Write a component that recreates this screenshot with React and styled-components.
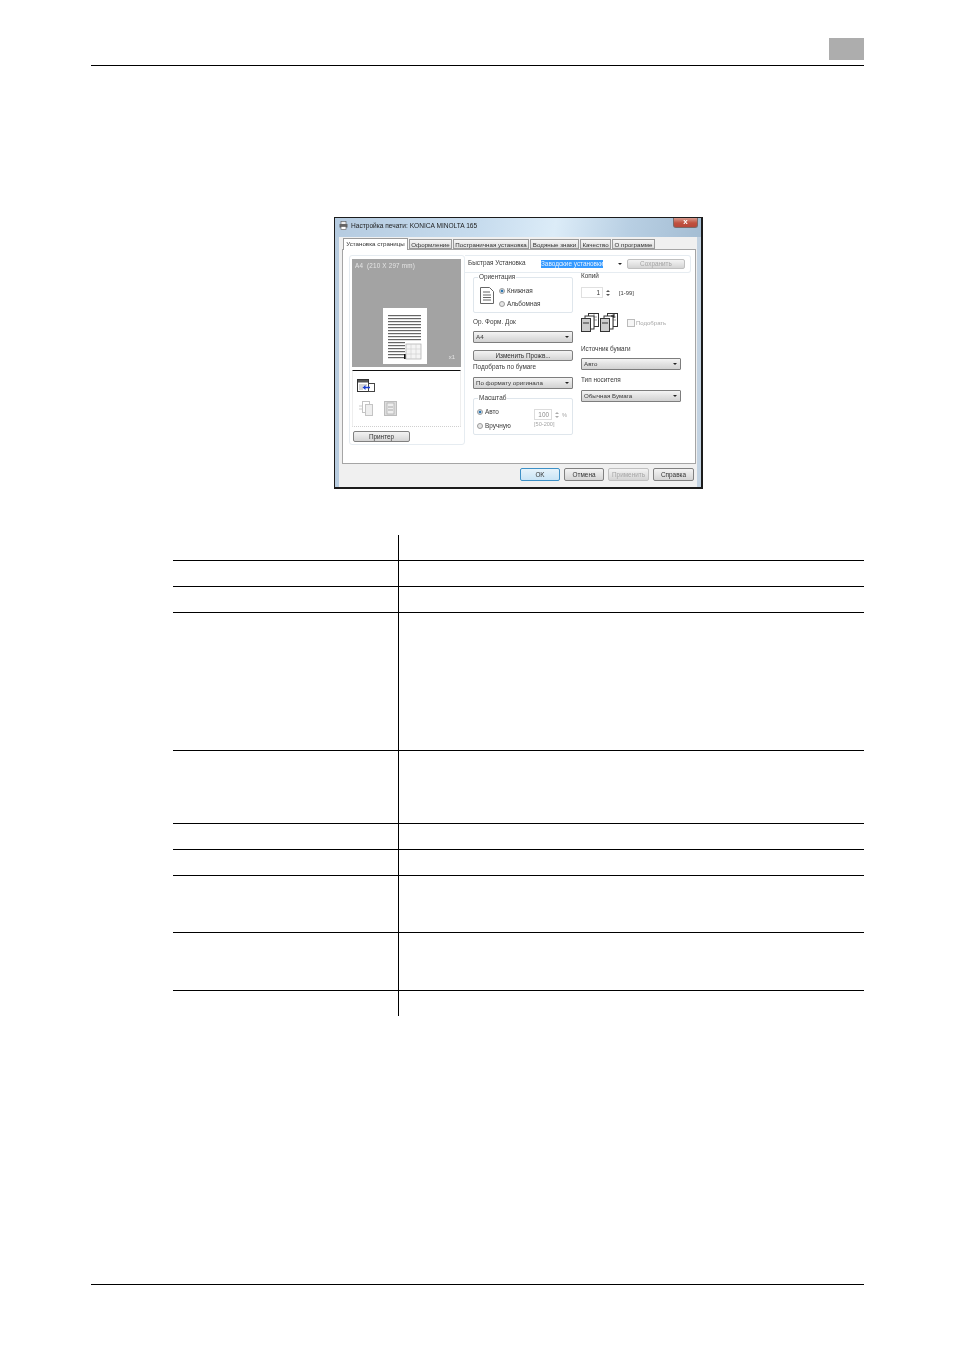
import React from "react";
import styled, { createGlobalStyle } from "styled-components";

const Global = createGlobalStyle`
  html, body { margin: 0; padding: 0; background: #fff; }
  body { font-family: "Liberation Sans", Arial, sans-serif; }
`;

const Page = styled.div`
  width: 954px;
  height: 1350px;
  overflow: hidden;
  display: flex;
  flex-direction: column;
  background: #fff;
`;

const Header = styled.header`
  margin: 38px 90px 0 91px;
  height: 27px;
  flex: none;
  border-bottom: 1px solid #000;
  display: flex;
  justify-content: flex-end;
  align-items: flex-start;
`;
const ChapterBox = styled.div`
  width: 35px;
  height: 22px;
  background: #adadad;
`;

const Dialog = styled.section`
  box-sizing: border-box;
  margin: 151px 0 0 334px;
  width: 369px;
  height: 272px;
  flex: none;
  background: #f0f0f0;
  border: 1px solid #1c1c1c;
  border-width: 1px 2px 2px 1px;
  box-shadow: inset 4px 0 0 #b9cde0, inset -4px 0 0 #c3d3e2;
  display: flex;
  flex-direction: column;
  font-size: 6.4px;
  line-height: 8px;
  color: #3a3a3a;
  filter: blur(0.4px);
`;

const TitleBar = styled.div`
  height: 19px;
  flex: none;
  padding: 0 3px 0 4px;
  display: flex;
  align-items: flex-start;
  background: linear-gradient(100deg, #b5cbe0 0%, #c7dcee 40%, #dcecf8 60%, #b8cfe3 80%, #a4bdd3 100%);
`;
const TitleIcon = styled.svg`
  width: 9px;
  height: 9px;
  margin: 3px 3px 0 0;
`;
const TitleText = styled.span`
  margin-top: 4px;
  font-size: 6.6px;
  color: #1d1d1d;
  flex: 1;
`;
const CloseButton = styled.div`
  width: 25px;
  height: 10px;
  background: linear-gradient(#d79a8e, #c0513e 55%, #b8473a);
  border: 1px solid #7b6a68;
  border-top: none;
  border-radius: 0 0 3px 3px;
  box-sizing: border-box;
  color: #fff;
  font-size: 8px;
  line-height: 8px;
  font-weight: bold;
  text-align: center;
`;

const Tabs = styled.div`
  flex: none;
  height: 12px;
  margin-left: 8px;
  display: flex;
  align-items: flex-end;
  position: relative;
  z-index: 1;
`;
const Tab = styled.div`
  box-sizing: border-box;
  width: ${(p) => p.$w}px;
  height: ${(p) => (p.$active ? 12 : 10)}px;
  margin-bottom: ${(p) => (p.$active ? -1 : 0)}px;
  background: ${(p) => (p.$active ? "#fff" : "linear-gradient(#f6f6f6,#dedede)")};
  border: 1px solid #9a9a9a;
  border-bottom: ${(p) => (p.$active ? "none" : "1px solid #9a9a9a")};
  font-size: 6.2px;
  line-height: 9px;
  text-align: center;
  white-space: nowrap;
  overflow: hidden;
  color: #333;
  margin-right: 1px;
`;

const TabPanel = styled.div`
  box-sizing: border-box;
  margin-left: 7px;
  width: 354px;
  height: 215px;
  flex: none;
  background: #fff;
  border: 1px solid #a5a5a5;
  padding: 5px 4px 0 6px;
  display: flex;
  align-items: flex-start;
`;

const LeftGroup = styled.div`
  box-sizing: border-box;
  width: 116px;
  height: 190px;
  flex: none;
  border: 1px solid #e6ecf1;
  border-radius: 3px;
  padding: 3px 3px 0 2px;
  display: flex;
  flex-direction: column;
`;
const Preview = styled.div`
  box-sizing: border-box;
  width: 109px;
  height: 108px;
  background: #a3a3a3;
  position: relative;
  flex: none;
  display: flex;
  align-items: flex-end;
  justify-content: center;
  padding-right: 3px;
  padding-bottom: 3px;
`;
const PreviewLabel = styled.span`
  position: absolute;
  left: 3px;
  top: 3px;
  color: #e4e4e4;
  font-size: 6.3px;
  letter-spacing: 0.2px;
`;
const PreviewCount = styled.span`
  position: absolute;
  right: 6px;
  bottom: 6px;
  color: #e4e4e4;
  font-size: 6px;
`;
const LayoutBox = styled.div`
  box-sizing: border-box;
  margin-top: 3px;
  width: 109px;
  height: 57px;
  border-top: 1px solid #111;
  border-left: 1px solid #eeeeee;
  border-right: 1px solid #eeeeee;
  border-bottom: 1px dotted #cfcfcf;
  padding: 8px 0 0 4px;
  display: flex;
  flex-direction: column;
  gap: 8px;
`;
const IconRow = styled.div`
  display: flex;
  gap: 11px;
  padding-left: 1px;
`;

const Button = styled.div`
  box-sizing: border-box;
  width: ${(p) => p.$w}px;
  height: ${(p) => p.$h || 11}px;
  border: 1px solid ${(p) => (p.$primary ? "#3d90c6" : p.$disabled ? "#c0c0c0" : "#808080")};
  border-radius: 2px;
  background: ${(p) => (p.$primary ? "linear-gradient(#e6f3fb,#c9e4f5)" : "linear-gradient(#f3f3f3,#e4e4e4 50%,#d4d4d4)")};
  color: ${(p) => (p.$disabled ? "#a5a5a5" : "#333")};
  font-size: 6.4px;
  line-height: ${(p) => (p.$h || 11) - 2}px;
  text-align: center;
  white-space: nowrap;
  flex: none;
  ${(p) => p.$mt ? `margin-top: ${p.$mt}px;` : ""}
  ${(p) => p.$ml ? `margin-left: ${p.$ml}px;` : ""}
`;

const RightArea = styled.div`
  flex: 1;
  display: flex;
  flex-direction: column;
  min-width: 0;
`;
const QuickBar = styled.div`
  box-sizing: border-box;
  height: 18px;
  width: 226px;
  flex: none;
  border: 1px solid #e6ecf1;
  border-left: none;
  border-radius: 0 3px 3px 0;
  display: flex;
  align-items: center;
  padding-left: 3px;
`;
const QuickLabel = styled.span`
  width: 73px;
  flex: none;
  margin-top: -2px;
  white-space: nowrap;
`;
const QuickSelect = styled.div`
  width: 83px;
  height: 10px;
  flex: none;
  display: flex;
  align-items: center;
  justify-content: space-between;
  padding-right: 2px;
  box-sizing: border-box;
`;
const Highlight = styled.span`
  background: #3399ff;
  color: #e8f2ff;
  width: 62px;
  height: 8px;
  line-height: 8px;
  white-space: nowrap;
  overflow: hidden;
`;
const Arrow = styled.span`
  width: 0;
  height: 0;
  border-left: 2px solid transparent;
  border-right: 2px solid transparent;
  border-top: 2.5px solid #222;
  margin-left: auto;
  flex: none;
`;

const Columns = styled.div`
  display: flex;
  padding-left: 8px;
  gap: 8px;
`;
const Col = styled.div`
  width: 100px;
  flex: none;
  display: flex;
  flex-direction: column;
`;
const Fieldset = styled.div`
  box-sizing: border-box;
  position: relative;
  width: 100px;
  height: ${(p) => p.$h}px;
  margin-top: ${(p) => p.$mt}px;
  border: 1px solid #dfe6ec;
  border-radius: 2px;
  flex: none;
`;
const Legend = styled.span`
  position: absolute;
  left: 4px;
  top: -5px;
  padding: 0 1px;
  background: #fff;
  white-space: nowrap;
  line-height: 7px;
`;
const Label = styled.div`
  margin-top: ${(p) => p.$mt}px;
  height: 8px;
  white-space: nowrap;
  flex: none;
`;
const Select = styled.div`
  box-sizing: border-box;
  margin-top: ${(p) => p.$mt}px;
  width: 100px;
  height: 12px;
  flex: none;
  border: 1px solid #7d7d7d;
  border-radius: 1px;
  background: linear-gradient(#f4f4f4,#e2e2e2 50%,#d2d2d2);
  padding: 0 3px 0 2px;
  display: flex;
  align-items: center;
  white-space: nowrap;
  font-size: 6.2px;
`;
const OrientRow = styled.div`
  display: flex;
  padding: 9px 0 0 6px;
  gap: 5px;
`;
const RadioColumn = styled.div`
  display: flex;
  flex-direction: column;
  gap: 5px;
`;
const RadioRow = styled.div`
  display: flex;
  align-items: center;
  gap: 2px;
  height: 8px;
  white-space: nowrap;
  color: #3a3a3a;
`;
const Radio = styled.span`
  width: 6px;
  height: 6px;
  border-radius: 50%;
  border: 1px solid #9b9b9b;
  box-sizing: border-box;
  background: ${(p) => (p.$on ? "radial-gradient(circle,#2b76b0 0 40%,#e2e9ef 60%)" : "#e6e6e6")};
  flex: none;
`;
const ScaleBody = styled.div`
  display: flex;
  padding: 9px 0 0 3px;
  justify-content: space-between;
`;
const ScaleRadios = styled.div`
  display: flex;
  flex-direction: column;
  gap: 6px;
`;
const ScaleValue = styled.div`
  display: flex;
  flex-direction: column;
  width: 38px;
  padding-top: 1px;
  color: #a5a5a5;
  font-size: 5.6px;
`;
const SpinRow = styled.div`
  display: flex;
  align-items: center;
  gap: 2px;
  margin-top: ${(p) => p.$mt || 0}px;
`;
const SpinInput = styled.div`
  box-sizing: border-box;
  width: ${(p) => p.$w}px;
  height: 11px;
  border: 1px solid ${(p) => (p.$dim ? "#dcdcdc" : "#e0e0e0")};
  color: ${(p) => (p.$dim ? "#8a8a8a" : "#333")};
  font-size: 6.4px;
  line-height: 9px;
  text-align: right;
  padding-right: 2px;
  flex: none;
`;
const Spinner = styled.div`
  display: flex;
  flex-direction: column;
  gap: 2px;
  width: 6px;
  align-items: center;
  flex: none;
`;
const SpinUp = styled.span`
  width: 0; height: 0;
  border-left: 2px solid transparent;
  border-right: 2px solid transparent;
  border-bottom: 2.5px solid ${(p) => (p.$dim ? "#aaa" : "#555")};
`;
const SpinDown = styled.span`
  width: 0; height: 0;
  border-left: 2px solid transparent;
  border-right: 2px solid transparent;
  border-top: 2.5px solid ${(p) => (p.$dim ? "#aaa" : "#555")};
`;
const Range = styled.span`
  margin-left: 6px;
  font-size: 5.8px;
`;
const CollateRow = styled.div`
  display: flex;
  align-items: center;
  margin-top: 15px;
  height: 19px;
  flex: none;
`;
const Checkbox = styled.span`
  width: 6px;
  height: 6px;
  border: 1px solid #bbb;
  background: #f6f6f6;
  margin-left: 8px;
  margin-right: 1px;
  flex: none;
`;
const DimText = styled.span`
  color: #a8a8a8;
  font-size: 6px;
`;

const ButtonRow = styled.div`
  height: 14px;
  flex: none;
  margin-top: 4px;
  padding-right: 7px;
  display: flex;
  justify-content: flex-end;
  gap: 4px;
`;

const Table = styled.div`
  box-sizing: border-box;
  margin: 46px 0 0 173px;
  width: 691px;
  display: flex;
  flex-direction: column;
  flex: none;
`;
const Row = styled.div`
  box-sizing: border-box;
  display: grid;
  grid-template-columns: 225px 1fr;
  height: ${(p) => p.$h}px;
  border-bottom: ${(p) => (p.$last ? "none" : "1px solid #000")};
  flex: none;
`;
const ValueCell = styled.div`
  border-left: 1px solid #000;
`;
const KeyCell = styled.div``;

const Footer = styled.footer`
  margin: 268px 90px 0 91px;
  border-top: 1px solid #000;
  height: 1px;
  flex: none;
`;

const PageDrawing = () => (
  <svg width="44" height="56" viewBox="0 0 44 56">
    <rect width="44" height="56" fill="#fff" />
    {[7, 10, 13, 16, 19, 22, 25, 28, 31].map((y) => (
      <rect key={y} x="5" y={y} width="33" height="1.2" fill="#666" />
    ))}
    {[34, 37, 40, 43, 46, 49].map((y) => (
      <rect key={y} x="5" y={y} width="17" height="1.2" fill="#666" />
    ))}
    <rect x="23" y="36" width="15" height="15" fill="#f4f4f4" stroke="#aaa" strokeWidth="0.7" />
    <path d="M28 36v15M33 36v15M23 41h15M23 46h15" stroke="#ccc" strokeWidth="0.6" />
    <rect x="21" y="46" width="1.6" height="5" fill="#111" />
  </svg>
);

const DocIcon = () => (
  <svg width="14" height="17" viewBox="0 0 14 17" style={{ flex: "none" }}>
    <path d="M.5.5h9l4 4v12H.5z" fill="#fff" stroke="#666" />
    <path d="M3 5h7M3 8h8M3 10.500h8M3 13h8" stroke="#666" />
  </svg>
);

const LayoutIcon = () => (
  <svg width="18" height="14" viewBox="0 0 18 14">
    <rect x=".5" y=".5" width="11" height="12" fill="#fff" stroke="#333" />
    <rect x="1" y="1" width="10" height="2.500" fill="#555" />
    <path d="M2 6h8M2 8h4M2 10h4" stroke="#888" strokeWidth=".7" />
    <rect x="11.500" y="4.500" width="6" height="8" fill="#fff" stroke="#444" />
    <path d="M8 8.500h5" stroke="#1a3fd0" strokeWidth="1.500" />
    <path d="M5.500 8.500l3-2.500v5z" fill="#1a3fd0" />
  </svg>
);

const GhostIconA = () => (
  <svg width="15" height="15" viewBox="0 0 15 15">
    <rect x="4.500" y=".5" width="7" height="11" fill="#fff" stroke="#c4c4c4" />
    <rect x="7.500" y="3.500" width="7" height="11" fill="#eee" stroke="#c4c4c4" />
    <path d="M1 5h3M1 8h3" stroke="#ccc" />
  </svg>
);
const GhostIconB = () => (
  <svg width="13" height="15" viewBox="0 0 13 15">
    <rect x=".5" y=".5" width="12" height="14" fill="#ddd" stroke="#bcbcbc" />
    <rect x="3" y="2" width="7" height="11" fill="#eee" stroke="#aaa" strokeWidth=".7" />
    <path d="M4 6h5M4 9h5" stroke="#aaa" />
  </svg>
);
const CopiesIcon = ({ stacked }) => (
  <svg width="19" height="19" viewBox="0 0 19 19">
    <rect x="7.500" y=".5" width="10" height="13" fill="#fff" stroke="#333" />
    <path d="M13 1v12M10 4h6M10 7h6" stroke="#777" strokeWidth=".7" />
    <rect x="4" y="3" width="9" height="13" fill="#fff" stroke="#333" />
    <rect x=".5" y="5.500" width="9" height="13" fill="#ccc" stroke="#333" />
    <path d="M2 10h6" stroke="#333" />
    {stacked && <path d="M11 3h3M14 1v4" stroke="#111" />}
  </svg>
);

const rows = [25, 25, 25, 137, 72, 25, 25, 56, 57, 25];

export default function App() {
  return (
    <Page>
      <Global />
      <Header>
        <ChapterBox />
      </Header>

      <Dialog>
        <TitleBar>
          <TitleIcon viewBox="0 0 9 9">
            <rect x="2" y="0.500" width="5" height="3" fill="#eee" stroke="#555" strokeWidth=".6" />
            <rect x="0.500" y="3" width="8" height="3.500" fill="#666" />
            <rect x="2" y="5.500" width="5" height="3" fill="#fff" stroke="#555" strokeWidth=".6" />
          </TitleIcon>
          <TitleText>Настройка печати: KONICA MINOLTA 165</TitleText>
          <CloseButton>x</CloseButton>
        </TitleBar>

        <Tabs>
          <Tab $active $w={65}>Установка страницы</Tab>
          <Tab $w={43}>Оформление</Tab>
          <Tab $w={76}>Постраничная установка</Tab>
          <Tab $w={49}>Водяные знаки</Tab>
          <Tab $w={31}>Качество</Tab>
          <Tab $w={43}>О программе</Tab>
        </Tabs>

        <TabPanel>
          <LeftGroup>
            <Preview>
              <PreviewLabel>A4 &nbsp;(210 X 297 mm)</PreviewLabel>
              <PageDrawing />
              <PreviewCount>x1</PreviewCount>
            </Preview>
            <LayoutBox>
              <LayoutIcon />
              <IconRow>
                <GhostIconA />
                <GhostIconB />
              </IconRow>
            </LayoutBox>
            <Button $w={57} $mt={4} $ml={1}>Принтер</Button>
          </LeftGroup>

          <RightArea>
            <QuickBar>
              <QuickLabel>Быстрая Установка</QuickLabel>
              <QuickSelect>
                <Highlight>Заводские установки</Highlight>
                <Arrow />
              </QuickSelect>
              <Button $w={58} $h={10} $ml={3} $disabled>Сохранить</Button>
            </QuickBar>

            <Columns>
              <Col>
                <Fieldset $h={36} $mt={4}>
                  <Legend>Ориентация</Legend>
                  <OrientRow>
                    <DocIcon />
                    <RadioColumn>
                      <RadioRow><Radio $on />Книжная</RadioRow>
                      <RadioRow><Radio />Альбомная</RadioRow>
                    </RadioColumn>
                  </OrientRow>
                </Fieldset>
                <Label $mt={5}>Ор. Форм. Док</Label>
                <Select $mt={5}>A4<Arrow /></Select>
                <Button $w={100} $h={11} $mt={7}>Изменить Прожв...</Button>
                <Label $mt={2}>Подобрать по бумаге</Label>
                <Select $mt={6}>По формату оригинала<Arrow /></Select>
                <Fieldset $h={37} $mt={9}>
                  <Legend>Масштаб</Legend>
                  <ScaleBody>
                    <ScaleRadios>
                      <RadioRow><Radio $on />Авто</RadioRow>
                      <RadioRow><Radio />Вручную</RadioRow>
                    </ScaleRadios>
                    <ScaleValue>
                      <SpinRow>
                        <SpinInput $w={18} $dim>100</SpinInput>
                        <Spinner><SpinUp $dim /><SpinDown $dim /></Spinner>
                        <span>%</span>
                      </SpinRow>
                      <span>[50-200]</span>
                    </ScaleValue>
                  </ScaleBody>
                </Fieldset>
              </Col>

              <Col>
                <Label $mt={-1}>Копий</Label>
                <SpinRow $mt={7}>
                  <SpinInput $w={22}>1</SpinInput>
                  <Spinner><SpinUp /><SpinDown /></Spinner>
                  <Range>[1-99]</Range>
                </SpinRow>
                <CollateRow>
                  <CopiesIcon />
                  <CopiesIcon stacked />
                  <Checkbox />
                  <DimText>Подобрать</DimText>
                </CollateRow>
                <Label $mt={13}>Источник бумаги</Label>
                <Select $mt={5}>Авто<Arrow /></Select>
                <Label $mt={6}>Тип носителя</Label>
                <Select $mt={6}>Обычная Бумага<Arrow /></Select>
              </Col>
            </Columns>
          </RightArea>
        </TabPanel>

        <ButtonRow>
          <Button $w={40} $h={13} $primary>OK</Button>
          <Button $w={40} $h={13}>Отмена</Button>
          <Button $w={41} $h={13} $disabled>Применить</Button>
          <Button $w={41} $h={13}>Справка</Button>
        </ButtonRow>
      </Dialog>

      <Table>
        {rows.map((h, i) => (
          <Row key={i} $h={h + (i === rows.length - 1 ? 0 : 1)} $last={i === rows.length - 1}>
            <KeyCell />
            <ValueCell />
          </Row>
        ))}
      </Table>

      <Footer />
    </Page>
  );
}
